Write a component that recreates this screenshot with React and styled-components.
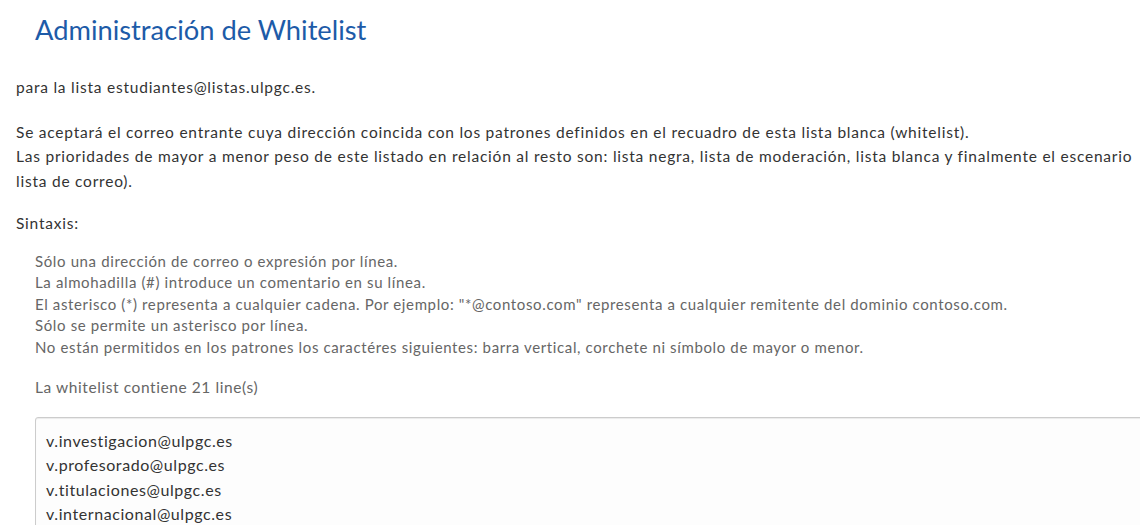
import React from "react";
import styled, { createGlobalStyle } from "styled-components";

const GlobalStyle = createGlobalStyle`
  html, body {
    margin: 0;
    padding: 0;
    background: #fff;
    overflow: hidden;
  }
  body {
    font-family: "Lato", "Open Sans", sans-serif;
    color: #333;
  }
`;

// Contenedor principal, algo más ancho que la ventana como en la captura
const Page = styled.div`
  width: 1160px;
  padding: 0 0 0 16px;
  box-sizing: border-box;
`;

const Title = styled.h2`
  margin: 0;
  padding: 13px 0 0 19px;
  font-size: 27.3px;
  font-weight: 400;
  line-height: 34px;
  color: #1d5ba8;
`;

const Paragraph = styled.p`
  margin: ${({ top }) => top || "0"} 0 0 0;
  font-size: 15.5px;
  line-height: 24.5px;
  letter-spacing: 0.77px;
`;

const Rules = styled.div`
  margin: 15px 0 0 19px;
  font-size: 15px;
  line-height: 21.5px;
  letter-spacing: 0.63px;
  color: #666;
`;

const Counter = styled.div`
  margin: 20px 0 0 19px;
  font-size: 15.5px;
  letter-spacing: 0.58px;
  color: #666;
`;

const ListBox = styled.div`
  margin: 21px 0 0 19px;
  padding: 11px 10px;
  border: 1px solid #ccc;
  border-radius: 3px;
  background: #fdfdfd;
  box-shadow: inset 0 1px 1px rgba(0, 0, 0, 0.075);
  font-size: 16px;
  line-height: 24.4px;
  letter-spacing: 0.58px;
  color: #333;
  height: 200px;
`;

const rules = [
  "Sólo una dirección de correo o expresión por línea.",
  "La almohadilla (#) introduce un comentario en su línea.",
  "El asterisco (*) representa a cualquier cadena. Por ejemplo: \"*@contoso.com\" representa a cualquier remitente del dominio contoso.com.",
  "Sólo se permite un asterisco por línea.",
  "No están permitidos en los patrones los caractéres siguientes: barra vertical, corchete ni símbolo de mayor o menor.",
];

const entries = [
  "v.investigacion@ulpgc.es",
  "v.profesorado@ulpgc.es",
  "v.titulaciones@ulpgc.es",
  "v.internacional@ulpgc.es",
];

export default function App() {
  return (
    <>
      <GlobalStyle />
      <Page>
        <Title>Administración de Whitelist</Title>
        <Paragraph top="28px">para la lista estudiantes@listas.ulpgc.es.</Paragraph>
        <Paragraph top="20px">
          Se aceptará el correo entrante cuya dirección coincida con los patrones definidos en el recuadro de esta lista blanca (whitelist).
          <br />
          Las prioridades de mayor a menor peso de este listado en relación al resto son: lista negra, lista de moderación, lista blanca y finalmente el escenario lista de correo).
        </Paragraph>
        <Paragraph top="18px">Sintaxis:</Paragraph>
        <Rules>
          {rules.map((r) => (
            <div key={r}>{r}</div>
          ))}
        </Rules>
        <Counter>La whitelist contiene 21 line(s)</Counter>
        <ListBox>
          {entries.map((e) => (
            <div key={e}>{e}</div>
          ))}
        </ListBox>
      </Page>
    </>
  );
}
